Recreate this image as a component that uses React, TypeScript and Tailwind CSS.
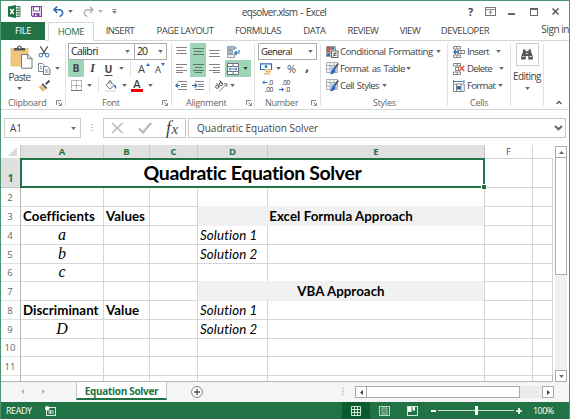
import type { ReactNode } from "react";

/* ---------- small shared pieces ---------- */

function Caret({ className = "", color = "#666" }: { className?: string; color?: string }) {
  return (
    <svg className={`shrink-0 ${className}`} width="5" height="3" viewBox="0 0 5 3">
      <path d="M0.2 0h4.6L2.5 3z" fill={color} />
    </svg>
  );
}

function Launcher() {
  return (
    <svg className="shrink-0" width="6" height="6" viewBox="0 0 6 6">
      <path d="M0.5 5V0.5H5M2.4 2.4L5 5M5.4 2.8v2.7H2.8" fill="none" stroke="#777" strokeWidth="0.9" />
    </svg>
  );
}

function Icon({ w, h, className = "", children }: { w: number; h: number; className?: string; children: ReactNode }) {
  return (
    <svg className={`shrink-0 ${className}`} width={w} height={h} viewBox={`0 0 ${w} ${h}`} fill="none">
      {children}
    </svg>
  );
}

function Lines({ rows, className = "", dark = false }: { rows: number[][]; className?: string; dark?: boolean }) {
  return (
    <Icon w={11} h={11} className={className}>
      {rows.map(([x, y, w]) => (
        <rect key={y} x={x} y={y} width={w} height="1" fill={dark ? "#5c7a6a" : "#858585"} />
      ))}
    </Icon>
  );
}

/* ---------- title bar ---------- */

function TitleBar() {
  return (
    <header className="flex h-[21px] shrink-0 items-center text-[#444]">
      <Icon w={13} h={13} className="ml-[7px]">
        <rect x="7" y="1.5" width="5" height="10" fill="#fff" stroke="#217346" strokeWidth="0.8" />
        <path d="M8 4h4M8 6.5h4M8 9h4M10 2v9" stroke="#217346" strokeWidth="0.8" />
        <path d="M0 1.4L8 0v13L0 11.6z" fill="#217346" />
        <path d="M2.2 4l3.6 5M5.8 4L2.2 9" stroke="#fff" strokeWidth="1.3" />
      </Icon>
      <Icon w={11} h={11} className="ml-[10px]">
        <path d="M0.6 0.6h9.8v9.8H1.6l-1-1z" stroke="#7f45a6" strokeWidth="1.2" />
        <path d="M2.5 1v4h6V1" stroke="#7f45a6" strokeWidth="0.9" />
        <rect x="2.5" y="7" width="6" height="3.5" fill="#7f45a6" />
        <rect x="4" y="8.2" width="1.5" height="2" fill="#fff" />
      </Icon>
      <Icon w={11} h={11} className="ml-[11px]">
        <path d="M4.2 0.5L1 3.7l3.2 3.2M1.2 3.7h4.6c5 0 5 5.5 0.8 6.8" stroke="#2b6cb5" strokeWidth="1.6" />
      </Icon>
      <Caret className="ml-[4px]" />
      <Icon w={11} h={11} className="ml-[10px]">
        <path d="M6.8 0.5L10 3.7 6.8 6.9M9.8 3.7H5.2c-5 0-5 5.5-0.8 6.8" stroke="#b4b4b4" strokeWidth="1.5" />
      </Icon>
      <Caret className="ml-[4px]" color="#b0b0b0" />
      <Icon w={5} h={5} className="ml-[9px]">
        <path d="M0.5 0.5h4" stroke="#777" strokeWidth="0.9" />
        <path d="M0.2 2h4.6L2.5 4.8z" fill="#777" />
      </Icon>
      <h1 className="ml-[112px] flex w-[112px] justify-center whitespace-nowrap pr-[2px] text-[10px] leading-[12px] tracking-[-0.66px] [word-spacing:1px]">
        eqsolver.xlsm - Excel
      </h1>
      <span className="ml-[126px] w-[7px] text-center text-[11px] font-bold leading-[12px]">?</span>
      <Icon w={11} h={9} className="ml-[11px]">
        <rect x="0.5" y="0.5" width="10" height="8" stroke="#777" />
        <path d="M0.5 2.5h10M5.5 7.5V4M3.7 5.6L5.5 3.8l1.8 1.8" stroke="#777" strokeWidth="0.9" />
      </Icon>
      <span className="ml-[12px] mt-[4px] h-[2px] w-[7px] bg-[#666]" />
      <span className="ml-[15px] h-[8px] w-[8px] border border-t-2 border-[#666]" />
      <Icon w={7} h={7} className="ml-[14px]">
        <path d="M0.5 0.5l6 6M6.5 0.5l-6 6" stroke="#555" strokeWidth="1.5" />
      </Icon>
    </header>
  );
}

/* ---------- ribbon tabs ---------- */

const tabs = [
  { label: "INSERT", cls: "w-[52px]" },
  { label: "PAGE LAYOUT", cls: "w-[78px]" },
  { label: "FORMULAS", cls: "w-[68px]" },
  { label: "DATA", cls: "w-[45px]" },
  { label: "REVIEW", cls: "w-[52px]" },
  { label: "VIEW", cls: "w-[42px]" },
  { label: "DEVELOPER", cls: "w-[68px]" },
];

function TabStrip() {
  return (
    <nav className="flex h-[19px] shrink-0 whitespace-nowrap text-[9.5px] leading-[18px] tracking-[-0.45px] text-[#444]">
      <div className="h-[18px] w-[44px] bg-[#217346] text-center text-white">FILE</div>
      <div className="w-[3px] border-b border-[#d8d8d8]" />
      <div className="w-[46px] border-x border-t border-[#d8d8d8] text-center leading-[17px] text-[#217346]">HOME</div>
      {tabs.map((t) => (
        <div key={t.label} className={`flex justify-center border-b border-[#d8d8d8] ${t.cls}`}>
          {t.label}
        </div>
      ))}
      <div className="flex flex-1 justify-end border-b border-[#d8d8d8] text-[10px] leading-[14px]">Sign in</div>
    </nav>
  );
}

/* ---------- ribbon ---------- */

function Group({ className, label, labelClass, launcher = false, children }: {
  className: string;
  label: string;
  labelClass: string;
  launcher?: boolean;
  children: ReactNode;
}) {
  return (
    <section className={`flex shrink-0 flex-col ${className}`}>
      {children}
      <div className="mt-[2px] flex h-[13px] items-center whitespace-nowrap text-[9px] leading-[13px] tracking-[-0.26px] text-[#666]">
        <span className={`shrink-0 ${labelClass}`}>{label}</span>
        {launcher && <Launcher />}
      </div>
    </section>
  );
}

function Divider() {
  return <div className="mb-[3px] mt-[1px] w-px shrink-0 bg-[#e1e1e1]" />;
}

const ROW = "flex h-[17px] shrink-0 items-center";

function Clipboard() {
  return (
    <Group className="w-[64px]" label="Clipboard" labelClass="ml-[7px] w-[48px]" launcher>
      <div className="flex h-[51px]">
        <div className="flex w-[37px] flex-col items-center">
          <Icon w={23} h={24} className="ml-[3px] mt-[2px]">
            <rect x="0.5" y="3" width="18" height="18.5" rx="0.8" fill="#eec57d" />
            <path d="M4 5.5h11V3h-3C11.5-0.3 7.5-0.3 7 3H4z" fill="#555" />
            <circle cx="9.5" cy="2.6" r="1" fill="#fff" />
            <path d="M11.5 9.5h6.5l4 4v9.7H11.5z" fill="#fff" stroke="#777" />
            <path d="M17.7 9.7v4h4" stroke="#777" />
          </Icon>
          <span className="mt-[2px] text-[10px] leading-[12px] tracking-[-0.7px] text-[#444]">Paste</span>
          <Caret className="mt-[4px]" />
        </div>
        <div className="flex flex-col">
          <div className={ROW}>
            <Icon w={12} h={12}>
              <path d="M2.3 0.3l5.2 8M9.7 0.3l-5.2 8" stroke="#555" strokeWidth="1.2" />
              <circle cx="2.8" cy="9.2" r="1.8" stroke="#2b6cb5" />
              <circle cx="9.2" cy="9.2" r="1.8" stroke="#2b6cb5" />
            </Icon>
          </div>
          <div className={ROW}>
            <Icon w={13} h={12}>
              <path d="M0.5 0.5h4l2 2v6h-6z" fill="#fff" stroke="#858585" />
              <path d="M5.5 3.5h4l2.5 2.5v5.5H5.5z" fill="#fff" stroke="#777" />
              <path d="M2 3.5h2M2 5.5h2M7 7h3.5M7 9h3.5" stroke="#4b87c5" strokeWidth="0.9" />
            </Icon>
            <Caret className="ml-[4px]" />
          </div>
          <div className={ROW}>
            <Icon w={12} h={12}>
              <path d="M11.5 0.5L7.8 4.2" stroke="#555" strokeWidth="2" />
              <path d="M4.5 3l5 5-1.7 1L3.6 4.6z" fill="#555" />
              <path d="M3.2 5L7.5 9.3 5 11.7 0.5 7z" fill="#ecba72" />
            </Icon>
          </div>
        </div>
      </div>
    </Group>
  );
}

function FontGroup() {
  return (
    <Group className="w-[105px]" label="Font" labelClass="ml-[36px] w-[60px]" launcher>
      <div className="ml-[2px] flex h-[17px] text-[10.5px] leading-[15px] text-[#222]">
        <div className="flex w-[67px] items-center justify-between border border-[#ababab] pl-[2px] pr-[4px] tracking-[-0.6px]">
          Calibri
          <Caret />
        </div>
        <div className="-ml-px flex w-[33px] items-center justify-between border border-[#ababab] pl-[2px] pr-[3px] tracking-[-0.9px]">
          20
          <Caret />
        </div>
      </div>
      <div className={`${ROW} ml-[2px] text-[10.5px] text-[#444]`}>
        <span className="w-[16px] bg-[#9fd5b7] text-center font-bold leading-[17px]">B</span>
        <span className="w-[17px] text-center font-['Liberation_Serif'] text-[12px] font-bold italic leading-[15px]">I</span>
        <span className="w-[15px] text-center font-bold leading-[14px] underline underline-offset-2">U</span>
        <Caret className="ml-[3px]" />
        <span className="ml-[6px] h-[15px] w-px bg-[#e1e1e1]" />
        <span className="ml-[7px] w-[8px] text-[11px] leading-[15px]">A</span>
        <Icon w={4} h={3} className="mb-[8px]">
          <path d="M0 3L2 0l2 3z" fill="#2b6cb5" />
        </Icon>
        <span className="ml-[5px] w-[6px] pt-[1px] text-[9.5px] leading-[15px]">A</span>
        <Icon w={4} h={3} className="mb-[8px]">
          <path d="M0 0h4L2 3z" fill="#2b6cb5" />
        </Icon>
      </div>
      <div className={`${ROW} ml-[5px] text-[#444]`}>
        <Icon w={11} h={11}>
          <path d="M0.5 0.5h10v10h-10zM5.5 0v11M0 5.5h11" stroke="#929292" strokeDasharray="1 0.4" strokeWidth="0.9" />
          <path d="M0 10.5h11" stroke="#777" />
        </Icon>
        <Caret className="ml-[5px]" />
        <span className="ml-[6px] h-[15px] w-px bg-[#e1e1e1]" />
        <Icon w={12} h={12} className="ml-[6px]">
          <path d="M1 5l4.2-3.7 4 4.2L5 9z" fill="#fff" stroke="#777" />
          <path d="M4 4V0.8C4-0.1 6-0.1 6 1v3" stroke="#777" strokeWidth="0.8" />
          <path d="M9 4.5c2.3 0.8 2.6 2.5 2 4.5-1.3-0.5-1.7-2.5-2-4.5z" fill="#2b6cb5" />
          <rect y="10" width="11" height="2" fill="#e8e8e8" />
        </Icon>
        <Caret className="ml-[5px]" />
        <span className="ml-[4px] mt-[1px] h-[12px] w-[12px] border-b-[3px] border-[#f00000] text-center text-[11px] font-semibold leading-[8px]">A</span>
        <Caret className="ml-[5px]" />
      </div>
    </Group>
  );
}

function Alignment() {
  return (
    <Group className="w-[82px]" label="Alignment" labelClass="ml-[14px] w-[60px]" launcher>
      <div className={ROW}>
        <Lines className="ml-[4px]" rows={[[0, 1, 11], [1, 4, 9], [0, 7, 11]]} />
        <div className="ml-[3px] flex h-[17px] w-[16px] items-center justify-center bg-[#9fd5b7]">
          <Lines dark rows={[[0, 2, 11], [1, 5, 9], [0, 8, 11]]} />
        </div>
        <Lines className="ml-[3px] mt-[4px]" rows={[[0, 2, 11], [1, 5, 9], [0, 8, 11]]} />
        <Icon w={13} h={12} className="ml-[7px]">
          <path d="M0.5 0.5h7v3h-7zM0.5 4.5h5v3h-5zM0.5 8.5h7v3h-7z" fill="#e8eef5" stroke="#858585" strokeWidth="0.8" />
          <path d="M1 2h9M1 6h4" stroke="#2b6cb5" strokeWidth="0.8" />
          <path d="M12 4v3H8M9.7 5L7.7 7l2 2" stroke="#2b6cb5" strokeWidth="1.1" />
        </Icon>
      </div>
      <div className={ROW}>
        <Lines className="ml-[4px]" rows={[[0, 1, 11], [0, 4, 7], [0, 7, 11], [0, 9, 7]]} />
        <div className="ml-[3px] flex h-[17px] w-[16px] items-center justify-center bg-[#9fd5b7]">
          <Lines dark rows={[[0, 1, 11], [2, 4, 7], [0, 7, 11], [2, 9, 7]]} />
        </div>
        <Lines className="ml-[3px]" rows={[[0, 1, 11], [4, 4, 7], [0, 7, 11], [4, 9, 7]]} />
        <div className="ml-[5px] flex h-[17px] w-[26px] items-center bg-[#9fd5b7] pl-[2px]">
          <Icon w={12} h={12}>
            <path d="M0.5 0.5h11v11H0.5zM0.5 3.5h11M0.5 8.5h11M6 0.5v3M6 8.5v3" fill="#fff" stroke="#667" strokeWidth="0.9" />
            <path d="M2 6h8M3.5 4.6L2 6l1.5 1.4M8.5 4.6L10 6 8.5 7.4" stroke="#2b6cb5" strokeWidth="0.9" />
          </Icon>
          <Caret className="ml-[4px]" color="#444" />
        </div>
      </div>
      <div className={ROW}>
        <Icon w={13} h={11} className="ml-[3px]">
          <path d="M3 1.5h9M6 4.5h6M6 6.5h6M3 9.5h9" stroke="#858585" />
          <path d="M5 5.5H1M3 3.3L0.8 5.5 3 7.7" stroke="#2b6cb5" strokeWidth="1.2" />
        </Icon>
        <Icon w={13} h={11} className="ml-[4px]">
          <path d="M3 1.5h9M6 4.5h6M6 6.5h6M3 9.5h9" stroke="#858585" />
          <path d="M0 5.5h4M2.6 3.3l2.2 2.2-2.2 2.2" stroke="#2b6cb5" strokeWidth="1.2" />
        </Icon>
        <span className="ml-[4px] h-[15px] w-px bg-[#e1e1e1]" />
        <Icon w={13} h={12} className="ml-[5px]">
          <circle cx="2.2" cy="6.8" r="1.6" stroke="#555" />
          <path d="M1.6 3.2l3 4" stroke="#555" />
          <circle cx="6" cy="4" r="1.6" stroke="#555" />
          <path d="M4.7 0.3l3 4.4" stroke="#555" />
          <path d="M4.3 11.3l7.4-7.4M8.7 3.8h3.2V7" stroke="#777" />
        </Icon>
        <Caret className="ml-[2px]" />
      </div>
    </Group>
  );
}

function NumberGroup() {
  return (
    <Group className="w-[65px]" label="Number" labelClass="ml-[10px] w-[46px]" launcher>
      <div className="ml-[3px] flex h-[17px] w-[59px] items-center justify-between border border-[#ababab] pl-[2px] pr-[3px] text-[9.5px] font-medium leading-[15px] tracking-[-0.6px] text-[#222]">
        General
        <Caret />
      </div>
      <div className={`${ROW} text-[#555]`}>
        <Icon w={13} h={12} className="ml-[5px]">
          <path d="M0.5 0.8h11v5.7H0.5z" fill="#fff" stroke="#2b6cb5" strokeWidth="1.2" />
          <circle cx="6" cy="3.6" r="1.4" fill="#2b6cb5" />
          <path d="M5 6h6v1.4H5zM5 8h6v1.4H5zM4 10h6v1.4H4z" fill="#ecba72" />
        </Icon>
        <Caret className="ml-[3px]" />
        <span className="ml-[6px] w-[12px] text-[11px] leading-[15px]">%</span>
        <span className="ml-[6px] -mt-[8px] text-[15px] font-bold leading-[14px]">,</span>
      </div>
      <div className={`${ROW} text-[6.5px] tracking-[-0.3px] text-[#333]`}>
        <div className="ml-[5px] grid h-[14px] w-[13px] grid-rows-[7px_7px] justify-items-end leading-[7px]">
          <span className="flex h-[7px] items-center">
            <Icon w={6} h={5}>
              <path d="M5.5 2.5H1M2.7 0.7L0.9 2.5l1.8 1.8" stroke="#2b6cb5" />
            </Icon>
            .0
          </span>
          <span className="h-[7px]">.00</span>
        </div>
        <div className="ml-[4px] grid h-[14px] w-[13px] grid-rows-[7px_7px] justify-items-end leading-[7px]">
          <span className="h-[7px]">.00</span>
          <span className="flex h-[7px] items-center">
            <Icon w={6} h={5}>
              <path d="M0 2.5h4.5M2.8 0.7l1.8 1.8-1.8 1.8" stroke="#2b6cb5" />
            </Icon>
            .0
          </span>
        </div>
      </div>
    </Group>
  );
}

function TableBrush() {
  return (
    <Icon w={13} h={13} className="ml-[5px]">
      <path d="M0.5 0.5h11v10H0.5zM0.5 3.5h11M0.5 7h11M4 0.5v10M8 0.5v10" fill="#fff" stroke="#999" strokeWidth="0.8" />
      <rect x="4" y="3.8" width="7" height="6.5" fill="#b8d0ea" />
      <path d="M12.3 1.5L8.3 7" stroke="#555" strokeWidth="1.8" />
      <path d="M7 6.3l2.4 1.6c0.2 2.5-1.8 4.3-5.4 4.4C5.8 10.6 5.2 8 7 6.3z" fill="#2b6cb5" />
    </Icon>
  );
}

function Styles() {
  const text = "ml-px shrink-0 whitespace-nowrap text-[9.7px] leading-[15px] text-[#444] [word-spacing:1.2px]";
  return (
    <Group className="w-[126px]" label="Styles" labelClass="ml-[52px]">
      <div className={ROW}>
        <Icon w={13} h={12} className="ml-[5px]">
          <path d="M0.5 0.5h9v10h-9zM0.5 3.5h9M0.5 7h9M5 0v10" fill="#fff" stroke="#888" strokeWidth="0.8" />
          <path d="M1 1h3.7v2.2H1zM1 4h3v2.5H1z" fill="#d8472b" />
          <path d="M5.3 1h3v2.2h-3zM1 7.5h3V10H1z" fill="#2b6cb5" />
          <rect x="5.5" y="5" width="6.5" height="6.5" fill="#fff" stroke="#666" />
          <path d="M7 7.3h3.6M7 9.3h3.6M10 6.3L7.6 10.3" stroke="#444" strokeWidth="0.8" />
        </Icon>
        <span className={`${text} w-[96px] tracking-[-0.57px]`}>Conditional Formatting</span>
        <Caret />
      </div>
      <div className={ROW}>
        <TableBrush />
        <span className={`${text} w-[66px] tracking-[-0.66px]`}>Format as Table</span>
        <Caret />
      </div>
      <div className={ROW}>
        <TableBrush />
        <span className={`${text} w-[42px] tracking-[-0.66px]`}>Cell Styles</span>
        <Caret />
      </div>
    </Group>
  );
}

function Cells() {
  const text = "ml-[2px] shrink-0 text-[9.7px] leading-[15px] text-[#444]";
  return (
    <Group className="w-[62px]" label="Cells" labelClass="ml-[22px]">
      <div className={ROW}>
        <Icon w={12} h={12} className="ml-[5px]">
          <path d="M0.5 0.5h7v2.5h-7zM4 0.5V3M0.5 9h7v2.5h-7zM4 9v2.5M4.5 4.5h7v3h-7zM8 4.5v3" stroke="#777" strokeWidth="0.9" />
          <path d="M6 6H1M2.8 4L0.8 6l2 2" stroke="#2b6cb5" strokeWidth="1.3" />
        </Icon>
        <span className={`${text} w-[29px] tracking-[-0.7px]`}>Insert</span>
        <Caret />
      </div>
      <div className={ROW}>
        <Icon w={12} h={12} className="ml-[5px]">
          <path d="M0.5 0.5h7v2.5h-7zM4 0.5V3M0.5 9h7v2.5h-7zM4 9v2.5M2.5 4.5h3v3h-3z" stroke="#777" strokeWidth="0.9" />
          <path d="M6.3 2.8l5 5.2M11.3 2.8l-5 5.2" stroke="#df4f32" strokeWidth="1.3" />
        </Icon>
        <span className={`${text} w-[32px] tracking-[-0.7px]`}>Delete</span>
        <Caret />
      </div>
      <div className={ROW}>
        <Icon w={12} h={12} className="ml-[5px]">
          <path d="M0.5 0v3M11 0v3M1 1.5h9.5" stroke="#2b6cb5" strokeWidth="0.9" />
          <path d="M0.5 4h10.7v7.5H0.5zM3.5 4v7.5M8 4v7.5" stroke="#777" strokeWidth="0.9" />
          <rect x="4" y="6" width="3.8" height="3.5" fill="#2b6cb5" />
        </Icon>
        <span className={`${text} w-[30.5px] tracking-[-0.75px]`}>Format</span>
        <Caret />
      </div>
    </Group>
  );
}

function Editing() {
  return (
    <section className="flex w-[32px] shrink-0 flex-col items-center">
      <div className="flex h-[23px] w-[23px] items-center justify-center border border-[#cfcfcf]">
        <Icon w={12} h={11}>
          <path d="M2 0.5h2.5v1.7h3V0.5H10v2l1.8 5v3H7.3V7H4.7v3.5H0.2v-3L2 2.5z" fill="#555" />
          <path d="M1 7.5h2.7M8.3 7.5H11M4.7 4.5h2.6" stroke="#fff" strokeWidth="0.7" />
        </Icon>
      </div>
      <span className="mt-[4px] text-[10px] leading-[13px] tracking-[-0.55px] text-[#444]">Editing</span>
      <Caret className="mt-[4px]" />
    </section>
  );
}

function Ribbon() {
  return (
    <div className="flex h-[69px] shrink-0 border-b border-[#d8d8d8] pt-[2px]">
      <Clipboard />
      <Divider />
      <FontGroup />
      <Divider />
      <Alignment />
      <Divider />
      <NumberGroup />
      <Divider />
      <Styles />
      <Divider />
      <Cells />
      <Divider />
      <Editing />
      <Divider />
      <div className="flex flex-1 items-end justify-center pb-[4px] pl-[4px]">
        <Icon w={6} h={5}>
          <path d="M0.5 4L3 1.5 5.5 4" stroke="#555" strokeWidth="1.3" />
        </Icon>
      </div>
    </div>
  );
}

/* ---------- formula bar ---------- */

function FormulaBar() {
  return (
    <div className="flex h-[35px] shrink-0 pl-[3px] pt-[8px] text-[10px] leading-[18px] text-[#444]">
      <div className="flex h-[20px] w-[77px] items-center justify-between border border-[#c9c9c9] pl-[5px] pr-[4px]">
        A1
        <Caret />
      </div>
      <Icon w={2} h={8} className="ml-[10px] mt-[6px]">
        <path d="M1 0v8" stroke="#888" strokeDasharray="1 2" />
      </Icon>
      <div className="ml-[10px] flex h-[20px] w-[83px] items-center border border-[#c9c9c9]">
        <Icon w={13} h={12} className="ml-[7px]">
          <path d="M1 1l10.5 10M11.5 1L1 11" stroke="#bdbdbd" strokeWidth="1.7" />
        </Icon>
        <Icon w={14} h={12} className="ml-[14px]">
          <path d="M1 6.5l4 4L13 1" stroke="#bdbdbd" strokeWidth="2.4" />
        </Icon>
        <span className="ml-[14px] font-['Liberation_Serif'] text-[18px] italic leading-[16px] tracking-[0.5px] text-[#444]">
          f<span className="text-[15px]">x</span>
        </span>
      </div>
      <div className="ml-[2px] flex h-[20px] w-[378px] items-center justify-between border border-[#c9c9c9] pl-[8px] pr-[2px]">
        <span className="tracking-[-0.02px]">Quadratic Equation Solver</span>
        <Icon w={9} h={6}>
          <path d="M1 1l3.5 3.3L8 1" stroke="#666" strokeWidth="2" />
        </Icon>
      </div>
    </div>
  );
}

/* ---------- worksheet ---------- */

const COLS = "grid shrink-0 grid-cols-[20px_83px_46px_48px_70px_217px_48px_20px]";
const CALIBRI = "font-['Lato',sans-serif]";

function ColumnHeaders() {
  const sel = "border-r border-[#c6c6c6] bg-[#e0e0e0] text-center font-bold text-[#217346]";
  return (
    <div className={`${COLS} h-[13px] text-[9.5px] leading-[13px]`}>
      <div className="flex items-end justify-end border-r border-[#c6c6c6] pb-[2px] pr-[3px]">
        <Icon w={9} h={9}>
          <path d="M9 0v9H0z" fill="#dcdcdc" />
        </Icon>
      </div>
      <div className={sel}>A</div>
      <div className={sel}>B</div>
      <div className={sel}>C</div>
      <div className={sel}>D</div>
      <div className={sel}>E</div>
      <div className="border-r border-[#d4d4d4] text-center text-[#555]">F</div>
      <div />
    </div>
  );
}

const heading = "text-[13.3px] font-bold tracking-[0.04px]";
const variable = "pr-[2px] text-center font-['Liberation_Serif',serif] text-[16px] italic";
const solution = "text-[13.3px] italic tracking-[0.12px]";

type Row = {
  n: number;
  h: string;
  a?: string;
  aCls?: string;
  b?: string;
  d?: string;
  band?: string;
};

const rows: Row[] = [
  { n: 2, h: "h-[19px]" },
  { n: 3, h: "h-[19px]", a: "Coefficients", aCls: heading, b: "Values", band: "Excel Formula Approach" },
  { n: 4, h: "h-[19px]", a: "a", aCls: variable, d: "Solution 1" },
  { n: 5, h: "h-[18px]", a: "b", aCls: variable, d: "Solution 2" },
  { n: 6, h: "h-[19px]", a: "c", aCls: variable },
  { n: 7, h: "h-[19px]", band: "VBA Approach" },
  { n: 8, h: "h-[19px]", a: "Discriminant", aCls: heading, b: "Value", d: "Solution 1" },
  { n: 9, h: "h-[18px]", a: "D", aCls: variable, d: "Solution 2" },
  { n: 10, h: "h-[19px]" },
  { n: 11, h: "h-[19px]" },
];

const CELL = "overflow-hidden whitespace-nowrap border-b border-r border-[#d6d6d6] pl-[2px]";

function SheetRow({ row }: { row: Row }) {
  return (
    <div className={`${COLS} ${row.h} ${CALIBRI} leading-[20px] text-black`}>
      <div className="border-b border-r border-b-[#e0e0e0] border-r-[#b5b5b5] pr-[1px] pt-[2px] text-center font-['Open_Sans',sans-serif] text-[9.5px] leading-[17px] text-[#666]">
        {row.n}
      </div>
      <div className={`${CELL} ${row.aCls ?? ""}`}>{row.a}</div>
      <div className={`${CELL} ${heading}`}>{row.b}</div>
      <div className={CELL} />
      {row.band ? (
        <div className={`col-span-2 border-r border-[#d6d6d6] bg-[#f1f1f1] text-center ${heading}`}>{row.band}</div>
      ) : (
        <>
          <div className={`${CELL} ${solution}`}>{row.d}</div>
          <div className={CELL} />
        </>
      )}
      <div className={CELL} />
      <div className={CELL} />
    </div>
  );
}

function Sheet() {
  return (
    <div className="flex h-[237px] shrink-0">
      <div className="flex w-[552px] flex-col overflow-hidden border-b border-[#b5b5b5]">
        <ColumnHeaders />
        <div className={`${COLS} h-[29px]`}>
          <div className="border-b border-r border-[#c6c6c6] bg-[#e0e0e0] pt-[13px] text-center text-[10px] font-bold leading-[15px] text-[#217346]">
            1
          </div>
          <div className={`relative -ml-px col-span-5 border-2 border-[#217346] text-center text-[19.5px] font-bold leading-[26px] tracking-[-0.37px] text-black ${CALIBRI}`}>
            Quadratic Equation Solver
            <span className="absolute -bottom-[3px] -right-[3px] h-[5px] w-[5px] border-l border-t border-white bg-[#217346]" />
          </div>
          <div className="border-b border-r border-t border-[#d6d6d6]" />
          <div className="border-b border-r border-t border-[#d6d6d6]" />
        </div>
        {rows.map((r) => (
          <SheetRow key={r.n} row={r} />
        ))}
        <div className={`${COLS} h-[7px]`}>
          <div className="border-r border-[#b5b5b5]" />
          <div className="border-r border-[#d6d6d6]" />
          <div className="border-r border-[#d6d6d6]" />
          <div className="border-r border-[#d6d6d6]" />
          <div className="border-r border-[#d6d6d6]" />
          <div className="border-r border-[#d6d6d6]" />
          <div className="border-r border-[#d6d6d6]" />
          <div className="border-r border-[#b5b5b5]" />
        </div>
      </div>
      <div className="ml-[2px] mt-px flex h-[236px] w-[12px] flex-col bg-[#f0f0f0]">
        <div className="flex h-[12px] shrink-0 items-center justify-center border border-[#ababab] bg-white">
          <Icon w={5} h={3}>
            <path d="M0 3L2.5 0 5 3z" fill="#666" />
          </Icon>
        </div>
        <div className="-mt-px h-[118px] shrink-0 border border-[#ababab] bg-white" />
        <div className="mt-auto flex h-[12px] shrink-0 items-center justify-center border border-[#ababab] bg-white">
          <Caret />
        </div>
      </div>
    </div>
  );
}

function SheetTabs() {
  return (
    <div className="flex h-[20px] shrink-0 bg-[#f5f5f5]">
      <div className="flex h-[18px] w-[75px] items-center">
        <Icon w={3} h={5} className="ml-[20px]">
          <path d="M3 0v5L0 2.5z" fill="#b4b4b4" />
        </Icon>
        <Icon w={3} h={5} className="ml-[18px]">
          <path d="M0 0v5l3-2.5z" fill="#b4b4b4" />
        </Icon>
      </div>
      <div className="h-[18px] w-[91px] border-x border-b-2 border-x-[#c6c6c6] border-b-[#217346] bg-white text-center text-[10px] font-bold leading-[18px] tracking-[-0.3px] text-[#217346]">
        Equation Solver
      </div>
      <Icon w={12} h={12} className="ml-[24px] mt-[4px]">
        <circle cx="6" cy="6" r="5.4" fill="#fff" stroke="#777" strokeWidth="0.9" />
        <path d="M6 3v6M3 6h6" stroke="#555" strokeWidth="1.4" />
      </Icon>
      <div className="flex flex-1 justify-end pr-[15px] pt-[4px]">
        <Icon w={2} h={8} className="mr-[11px] mt-[2px]">
          <path d="M1 0v8" stroke="#888" strokeDasharray="1 1.5" />
        </Icon>
        <div className="flex h-[12px] w-[199px] bg-[#ebebeb]">
          <div className="flex w-[12px] items-center justify-center border border-[#ababab] bg-white">
            <Icon w={3} h={5}>
              <path d="M3 0v5L0 2.5z" fill="#444" />
            </Icon>
          </div>
          <div className="-ml-px w-[154px] border border-[#ababab] bg-white" />
          <div className="ml-auto flex w-[12px] items-center justify-center border border-[#ababab] bg-white">
            <Icon w={3} h={5}>
              <path d="M0 0v5l3-2.5z" fill="#444" />
            </Icon>
          </div>
        </div>
      </div>
    </div>
  );
}

function StatusBar() {
  return (
    <footer className="flex flex-1 items-center bg-[#217346] text-[9px] leading-[17px] text-white">
      <span className="ml-[5px] w-[39px] tracking-[-0.45px]">READY</span>
      <Icon w={11} h={10}>
        <rect x="1.5" y="1.5" width="9" height="8" stroke="#dcebe2" />
        <path d="M3 5h6M3 7h6M5.5 4v4" stroke="#dcebe2" strokeWidth="0.9" />
        <circle cx="2.2" cy="2.2" r="2.2" fill="#fff" />
      </Icon>
      <div className="ml-[286px] flex h-full w-[28px] items-center justify-center bg-[#0a5c2f]">
        <Icon w={10} h={10}>
          <path d="M0.5 0.5h9v9h-9zM3.5 0v10M6.5 0v10M0 3.5h10M0 6.5h10" stroke="#e6f1ea" strokeWidth="0.9" />
        </Icon>
      </div>
      <Icon w={11} h={10} className="ml-[9px]">
        <rect x="0.5" y="0.5" width="10" height="9" stroke="#cfe2d6" strokeWidth="0.9" />
        <rect x="3" y="2" width="5" height="6" stroke="#cfe2d6" strokeWidth="0.8" />
        <path d="M4 4h3M4 6h3" stroke="#cfe2d6" strokeWidth="0.7" />
      </Icon>
      <Icon w={11} h={10} className="ml-[17px]">
        <rect x="0.5" y="0.5" width="10" height="9" stroke="#e6f1ea" strokeWidth="0.9" />
        <path d="M1 1h3.5v5H1zM5.5 1H8v3.5H5.5z" fill="#fff" />
      </Icon>
      <span className="ml-[13px] h-[2px] w-[5px] bg-white" />
      <div className="ml-[2px] flex h-[9px] w-[76px] items-center">
        <span className="h-px w-[37px] bg-[#cfe2d6]" />
        <span className="h-[9px] w-[3px] bg-white" />
        <span className="h-px flex-1 bg-[#cfe2d6]" />
      </div>
      <Icon w={6} h={6} className="ml-[2px]">
        <path d="M3 0v6M0 3h6" stroke="#fff" strokeWidth="1.7" />
      </Icon>
      <span className="ml-[11px] tracking-[-0.55px]">100%</span>
    </footer>
  );
}

export default function App() {
  return (
    <div className="flex h-[419px] w-[570px] flex-col overflow-hidden border-x border-t border-[#4f9470] bg-white font-['Open_Sans',sans-serif]">
      <TitleBar />
      <TabStrip />
      <Ribbon />
      <FormulaBar />
      <Sheet />
      <SheetTabs />
      <StatusBar />
    </div>
  );
}
